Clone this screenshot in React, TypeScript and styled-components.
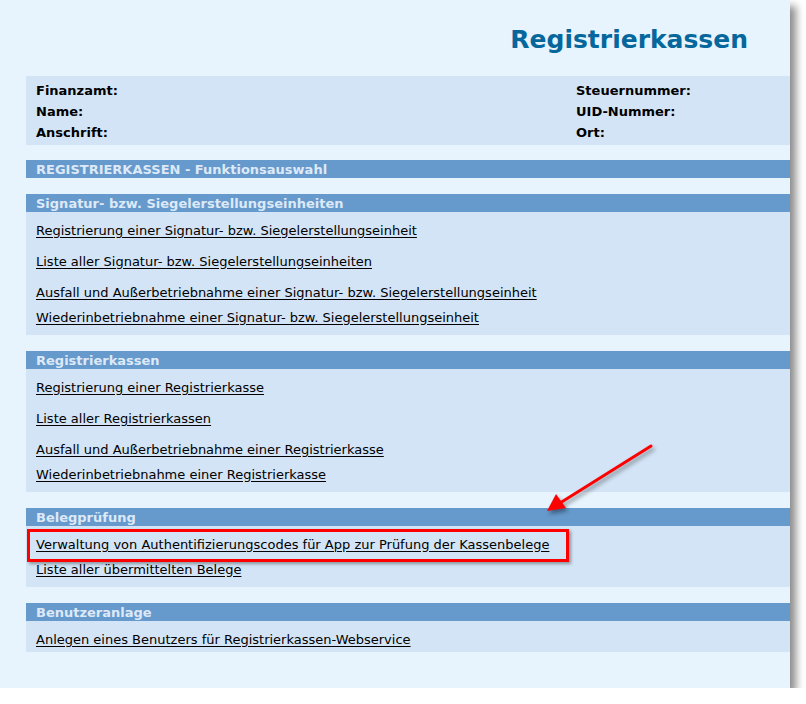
import React from "react";
import styled, { createGlobalStyle } from "styled-components";

const GlobalStyle = createGlobalStyle`
  html, body {
    margin: 0;
    padding: 0;
    background: #ffffff;
  }
  body {
    font-family: "DejaVu Sans", Verdana, sans-serif;
  }
`;

// Styled Components
const Page = styled.div`
  position: relative;
  width: 790px;
  height: 688px;
  box-sizing: border-box;
  background-color: #e7f3fd;
  box-shadow: 6px 6px 8px rgba(0, 0, 0, 0.45);
  padding: 24px 0 0 26px;
`;

const Title = styled.h1`
  margin: 0 42px 20px 0;
  text-align: right;
  font-family: "DejaVu Sans", Tahoma, sans-serif;
  font-weight: bold;
  font-size: 25px;
  line-height: 32px;
  color: #05679c;
`;

const InfoBox = styled.div`
  display: grid;
  grid-template-columns: 540px 1fr;
  padding: 4px 10px 2px;
  background-color: #d3e4f6;
`;

const InfoLabel = styled.div`
  font-weight: bold;
  font-size: 13px;
  line-height: 21px;
  color: #000;
`;

const Section = styled.section<{ $gap?: number }>`
  margin-top: ${(p) => p.$gap ?? 16}px;
`;

const SectionBar = styled.div`
  height: 18px;
  box-sizing: border-box;
  padding: 1px 0 0 10px;
  line-height: 18px;
  background-color: #6699cc;
  color: #dde9f7;
  font-weight: bold;
  font-size: 13px;
  white-space: nowrap;
  overflow: hidden;
`;

const LinkList = styled.div<{ $tight?: boolean }>`
  display: flex;
  flex-direction: column;
  padding: 5.5px 10px ${(p) => (p.$tight ? 0 : 5.5)}px;
  background-color: #d3e4f6;
`;

const LinkRow = styled.a<{ $spaced?: boolean }>`
  display: block;
  height: 25px;
  line-height: 25px;
  margin-bottom: ${(p) => (p.$spaced ? 6 : 0)}px;
  font-size: 13px;
  color: #000;
  text-decoration: underline;
  text-underline-offset: 2px;
  cursor: pointer;
  width: fit-content;
  white-space: nowrap;
`;

const Highlight = styled.div`
  position: absolute;
  left: 27px;
  top: 529px;
  width: 542px;
  height: 33px;
  box-sizing: border-box;
  border: 3px solid #ff0000;
  box-shadow: 2px 2px 3px rgba(0, 0, 0, 0.35);
  pointer-events: none;
`;

const Arrow = styled.svg`
  position: absolute;
  left: 530px;
  top: 436px;
  overflow: visible;
  filter: drop-shadow(2px 3px 2px rgba(0, 0, 0, 0.4));
  pointer-events: none;
`;

type LinkItem = { label: string; spaced?: boolean };

const sections: { title: string; tight?: boolean; links: LinkItem[] }[] = [
  {
    title: "Signatur- bzw. Siegelerstellungseinheiten",
    links: [
      { label: "Registrierung einer Signatur- bzw. Siegelerstellungseinheit", spaced: true },
      { label: "Liste aller Signatur- bzw. Siegelerstellungseinheiten", spaced: true },
      { label: "Ausfall und Außerbetriebnahme einer Signatur- bzw. Siegelerstellungseinheit" },
      { label: "Wiederinbetriebnahme einer Signatur- bzw. Siegelerstellungseinheit" },
    ],
  },
  {
    title: "Registrierkassen",
    links: [
      { label: "Registrierung einer Registrierkasse", spaced: true },
      { label: "Liste aller Registrierkassen", spaced: true },
      { label: "Ausfall und Außerbetriebnahme einer Registrierkasse" },
      { label: "Wiederinbetriebnahme einer Registrierkasse" },
    ],
  },
  {
    title: "Belegprüfung",
    links: [
      { label: "Verwaltung von Authentifizierungscodes für App zur Prüfung der Kassenbelege" },
      { label: "Liste aller übermittelten Belege" },
    ],
  },
  {
    title: "Benutzeranlage",
    tight: true,
    links: [{ label: "Anlegen eines Benutzers für Registrierkassen-Webservice" }],
  },
];

export default function App() {
  return (
    <>
      <GlobalStyle />
      <Page>
        <Title>Registrierkassen</Title>
        <InfoBox>
          <InfoLabel>Finanzamt:</InfoLabel>
          <InfoLabel>Steuernummer:</InfoLabel>
          <InfoLabel>Name:</InfoLabel>
          <InfoLabel>UID-Nummer:</InfoLabel>
          <InfoLabel>Anschrift:</InfoLabel>
          <InfoLabel>Ort:</InfoLabel>
        </InfoBox>

        <Section $gap={15}>
          <SectionBar>REGISTRIERKASSEN - Funktionsauswahl</SectionBar>
        </Section>

        {sections.map((section) => (
          <Section key={section.title}>
            <SectionBar>{section.title}</SectionBar>
            <LinkList $tight={section.tight}>
              {section.links.map((link) => (
                <LinkRow key={link.label} $spaced={link.spaced}>
                  {link.label}
                </LinkRow>
              ))}
            </LinkList>
          </Section>
        ))}

        <Highlight />
        <Arrow width="130" height="80" viewBox="0 0 130 80">
          <line x1="121" y1="10" x2="30" y2="67" stroke="#ff0000" strokeWidth="3" strokeLinecap="round" />
          <polygon points="17,75 26,58 36,72" fill="#ff0000" />
        </Arrow>
      </Page>
    </>
  );
}
